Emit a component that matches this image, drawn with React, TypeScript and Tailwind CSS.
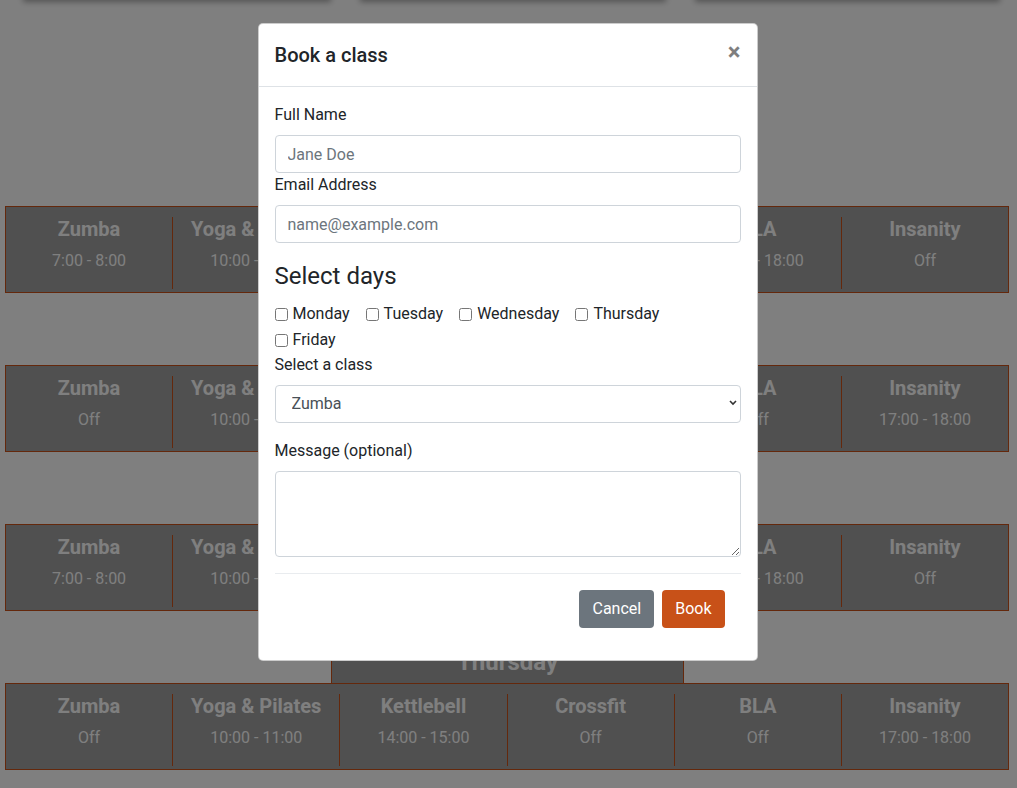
import React from "react";

type Slot = { name: string; time: string };

const days: { day: string; slots: Slot[] }[] = [
  {
    day: "Monday",
    slots: [
      { name: "Zumba", time: "7:00 - 8:00" },
      { name: "Yoga & Pilates", time: "10:00 - 11:00" },
      { name: "Kettlebell", time: "Off" },
      { name: "Crossfit", time: "14:00 - 15:00" },
      { name: "BLA", time: "17:00 - 18:00" },
      { name: "Insanity", time: "Off" },
    ],
  },
  {
    day: "Tuesday",
    slots: [
      { name: "Zumba", time: "Off" },
      { name: "Yoga & Pilates", time: "10:00 - 11:00" },
      { name: "Kettlebell", time: "14:00 - 15:00" },
      { name: "Crossfit", time: "Off" },
      { name: "BLA", time: "Off" },
      { name: "Insanity", time: "17:00 - 18:00" },
    ],
  },
  {
    day: "Wednesday",
    slots: [
      { name: "Zumba", time: "7:00 - 8:00" },
      { name: "Yoga & Pilates", time: "10:00 - 11:00" },
      { name: "Kettlebell", time: "Off" },
      { name: "Crossfit", time: "14:00 - 15:00" },
      { name: "BLA", time: "17:00 - 18:00" },
      { name: "Insanity", time: "Off" },
    ],
  },
  {
    day: "Thursday",
    slots: [
      { name: "Zumba", time: "Off" },
      { name: "Yoga & Pilates", time: "10:00 - 11:00" },
      { name: "Kettlebell", time: "14:00 - 15:00" },
      { name: "Crossfit", time: "Off" },
      { name: "BLA", time: "Off" },
      { name: "Insanity", time: "17:00 - 18:00" },
    ],
  },
];

function DayRow({ day, slots, first }: { day: string; slots: Slot[]; first: boolean }) {
  return (
    <section className={first ? "mt-[163px]" : "mt-[29px]"}>
      <div className="ml-[331px] w-[353px] h-[43px] flex items-center justify-center bg-[#a0a0a0] border-t border-x border-[#c85118] text-white text-[24px] font-bold">
        {day}
      </div>
      <div className="ml-[5px] w-[1004px] h-[87px] flex bg-[#a0a0a0] border border-[#c85118]">
        {slots.map((s, i) => (
          <div
            key={s.name}
            className={
              "flex-1 mt-[10px] h-[72px] flex flex-col items-center text-white " +
              (i < slots.length - 1 ? "border-r border-[#c85118]" : "")
            }
          >
            <div className="text-[20px] font-bold leading-[25px]">{s.name}</div>
            <div className="mt-[7px] text-[16px] leading-6">{s.time}</div>
          </div>
        ))}
      </div>
    </section>
  );
}

function Check({ label }: { label: string }) {
  return (
    <label className="flex items-center mr-[16px] h-6">
      <input type="checkbox" className="w-[13px] h-[13px] m-0 mr-[5px]" />
      <span>{label}</span>
    </label>
  );
}

export default function App() {
  const input =
    "block w-full h-[38px] px-3 bg-white border border-[#ced4da] rounded text-[16px] text-[#495057] placeholder:text-[#6c757d] outline-none";

  return (
    <div
      className="relative h-[788px] overflow-hidden bg-white"
      style={{ fontFamily: "Roboto, 'Liberation Sans', sans-serif" }}
    >
      <div className="flex ml-[23px] gap-[29px] -mt-[100px] h-[100px]">
        <div className="w-[308px] bg-white shadow-[0_2px_6px_rgba(0,0,0,0.35)]" />
        <div className="w-[306px] bg-white shadow-[0_2px_6px_rgba(0,0,0,0.35)]" />
        <div className="w-[305px] bg-white shadow-[0_2px_6px_rgba(0,0,0,0.35)]" />
      </div>

      {days.map((d, i) => (
        <DayRow key={d.day} day={d.day} slots={d.slots} first={i === 0} />
      ))}

      <div className="absolute inset-0 bg-black/50 flex justify-center items-start">
        <div className="mt-[23px] -ml-[2px] w-[500px] bg-white border border-black/20 rounded-[5px] text-[#212529] text-[16px] leading-6">
          <div className="flex items-start justify-between p-4 border-b border-[#dee2e6]">
            <h5 className="text-[20px] font-medium leading-[30px]">Book a class</h5>
            <button className="text-[24px] font-bold leading-none text-black opacity-50">×</button>
          </div>
          <form className="p-4">
            <label className="block mb-2">Full Name</label>
            <input className={input} placeholder="Jane Doe" />
            <label className="block mb-2">Email Address</label>
            <input className={input} placeholder="name@example.com" />

            <h4 className="mt-[19px] mb-[11px] text-[24px] font-normal leading-[29px]">Select days</h4>
            <div className="flex flex-wrap gap-y-[2px] mb-[1px]">
              <Check label="Monday" />
              <Check label="Tuesday" />
              <Check label="Wednesday" />
              <Check label="Thursday" />
              <Check label="Friday" />
            </div>

            <label className="block mb-2">Select a class</label>
            <div className="relative mb-4">
              <select className="block w-full h-[38px] pl-4 pr-8 bg-white border border-[#ced4da] rounded text-[16px] text-[#495057] appearance-none outline-none">
                <option>Zumba</option>
                <option>Yoga &amp; Pilates</option>
                <option>Kettlebell</option>
                <option>Crossfit</option>
                <option>BLA</option>
                <option>Insanity</option>
              </select>
              <svg
                className="absolute right-[4px] top-[15px] w-[8px] h-[6px] pointer-events-none"
                viewBox="0 0 8 6"
              >
                <path d="M1 1l3 3 3-3" fill="none" stroke="#333" strokeWidth="1.6" />
              </svg>
            </div>

            <label className="block mb-2">Message (optional)</label>
            <textarea className="block w-full h-[86px] mb-4 bg-white border border-[#ced4da] rounded outline-none" />

            <div className="flex justify-end p-3 border-t border-[#e9ecef]">
              <button type="button" className="m-1 h-[38px] px-[13px] rounded bg-[#6c757d] text-white">
                Cancel
              </button>
              <button type="button" className="m-1 h-[38px] px-[13px] rounded bg-[#c85118] text-white">
                Book
              </button>
            </div>
          </form>
        </div>
      </div>
    </div>
  );
}
